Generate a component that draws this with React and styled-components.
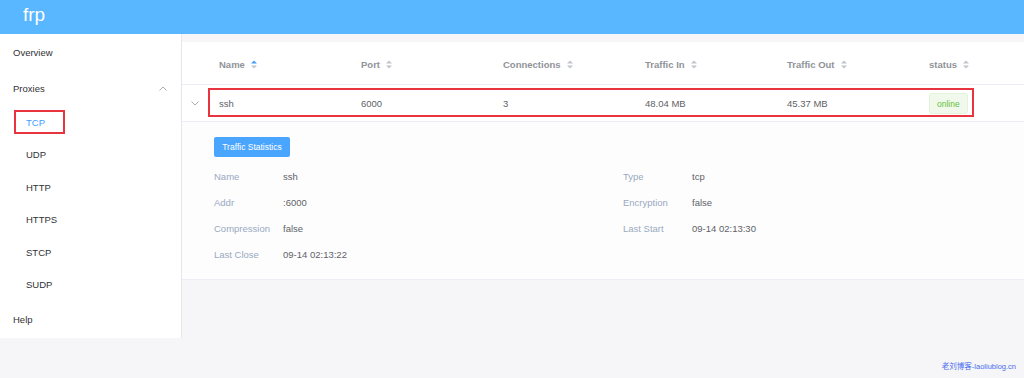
import React from "react"
import styled, { createGlobalStyle } from "styled-components"

const GlobalStyle = createGlobalStyle`
  html, body {
    margin: 0;
    padding: 0;
    background: #f6f6f8;
    font-family: "Liberation Sans", Arial, sans-serif;
  }
`

const columns = ["Name", "Port", "Connections", "Traffic In", "Traffic Out", "status"]
const row = { name: "ssh", port: "6000", conns: "3", trafficIn: "48.04 MB", trafficOut: "45.37 MB" }

const menu = ["TCP", "UDP", "HTTP", "HTTPS", "STCP", "SUDP"]

const leftDetails = [
  ["Name", "ssh"],
  ["Addr", ":6000"],
  ["Compression", "false"],
  ["Last Close", "09-14 02:13:22"],
]
const rightDetails = [
  ["Type", "tcp"],
  ["Encryption", "false"],
  ["Last Start", "09-14 02:13:30"],
]

const Chevron = ({ up }) => (
  <svg width="8" height="5" viewBox="0 0 8 5">
    <path
      d={up ? "M0.5 4.5 L4 1 L7.5 4.5" : "M0.5 0.5 L4 4 L7.5 0.5"}
      fill="none"
      stroke="#a0a4ab"
      strokeWidth="0.9"
    />
  </svg>
)

const SortCaret = ({ active }) => (
  <svg width="6" height="9" viewBox="0 0 6 9">
    <path d="M0 3.6 L3 0.4 L6 3.6 Z" fill={active ? "#409eff" : "#c0c4cc"} />
    <path d="M0 5.4 L3 8.6 L6 5.4 Z" fill="#c0c4cc" />
  </svg>
)

const App = () => {
  return (
    <Page>
      <GlobalStyle />
      <Header>
        <Logo>frp</Logo>
      </Header>
      <Body>
        <Sidebar>
          <MenuItem>Overview</MenuItem>
          <MenuItem>
            Proxies
            <Chevron up />
          </MenuItem>
          {menu.map(item => (
            <SubItem key={item}>
              <SubLabel $active={item === "TCP"}>{item}</SubLabel>
            </SubItem>
          ))}
          <MenuItem>Help</MenuItem>
        </Sidebar>
        <Main>
          <Panel>
            <HeadRow>
              <ExpandCell />
              {columns.map((c, i) => (
                <HeadCell key={c}>
                  {c}
                  <SortCaret active={i === 0} />
                </HeadCell>
              ))}
            </HeadRow>
            <DataRow>
              <ExpandCell>
                <Chevron />
              </ExpandCell>
              <Cell>{row.name}</Cell>
              <Cell>{row.port}</Cell>
              <Cell>{row.conns}</Cell>
              <Cell>{row.trafficIn}</Cell>
              <Cell>{row.trafficOut}</Cell>
              <Cell>
                <Tag>online</Tag>
              </Cell>
              <Highlight />
            </DataRow>
            <Expanded>
              <Button>Traffic Statistics</Button>
              <DetailGrid>
                <DetailCol>
                  {leftDetails.map(([k, v]) => (
                    <DetailRow key={k}>
                      <DetailLabel>{k}</DetailLabel>
                      <DetailValue>{v}</DetailValue>
                    </DetailRow>
                  ))}
                </DetailCol>
                <DetailCol>
                  {rightDetails.map(([k, v]) => (
                    <DetailRow key={k}>
                      <DetailLabel>{k}</DetailLabel>
                      <DetailValue>{v}</DetailValue>
                    </DetailRow>
                  ))}
                </DetailCol>
              </DetailGrid>
            </Expanded>
          </Panel>
        </Main>
      </Body>
      <Watermark>老刘博客-laoliublog.cn</Watermark>
    </Page>
  )
}
export default App

const Page = styled.div`
  position: relative;
  width: 1024px;
  height: 378px;
  overflow: hidden;
  background: #f6f6f8;
`
const Header = styled.div`
  height: 34px;
  background: #58b7ff;
  display: flex;
  align-items: center;
  padding-left: 23px;
`
const Logo = styled.span`
  color: #fff;
  font-size: 19px;
  margin-top: -5px;
`
const Body = styled.div`
  display: flex;
  height: 304px;
`
const Sidebar = styled.div`
  flex-shrink: 0;
  width: 182px;
  box-sizing: border-box;
  background: #fff;
  border-right: 1px solid #e6e6e6;
  display: flex;
  flex-direction: column;
`
const MenuItem = styled.div`
  height: 36px;
  display: flex;
  align-items: center;
  justify-content: space-between;
  padding: 1px 14px 0 13px;
  box-sizing: border-box;
  font-size: 9.5px;
  color: #303133;
`
const SubItem = styled.div`
  height: 32.5px;
  display: flex;
  align-items: center;
  padding-left: 14px;
`
const SubLabel = styled.span`
  display: flex;
  align-items: center;
  box-sizing: border-box;
  width: 51px;
  height: 24px;
  padding-left: 10px;
  font-size: 9.5px;
  color: ${props => (props.$active ? "#409eff" : "#303133")};
  border: 2px solid ${props => (props.$active ? "#e8343f" : "transparent")};
`
const Main = styled.div`
  flex: 1;
  min-width: 0;
  padding-top: 8px;
  background: #f6f6f8;
`
const Panel = styled.div`
  background: #fff;
`
const HeadRow = styled.div`
  display: flex;
  height: 43px;
  padding-top: 2px;
  align-items: center;
  border-bottom: 1px solid #ebeef5;
  box-sizing: border-box;
`
const ExpandCell = styled.div`
  flex: 0 0 26px;
  display: flex;
  justify-content: center;
  align-items: center;
`
const HeadCell = styled.div`
  flex: 0 0 142px;
  box-sizing: border-box;
  padding-left: 11px;
  display: flex;
  align-items: center;
  gap: 6px;
  font-size: 9.5px;
  font-weight: bold;
  color: #909399;
  &:last-child {
    flex: 1 1 auto;
  }
`
const DataRow = styled.div`
  position: relative;
  display: flex;
  height: 37px;
  padding-top: 1px;
  align-items: center;
  border-bottom: 1px solid #ebeef5;
  box-sizing: border-box;
`
const Cell = styled.div`
  flex: 0 0 142px;
  box-sizing: border-box;
  padding-left: 11px;
  font-size: 9.5px;
  color: #606266;
  &:nth-last-child(2) {
    flex: 1 1 auto;
  }
`
const Tag = styled.span`
  display: inline-flex;
  align-items: center;
  height: 21px;
  padding: 0 7px;
  box-sizing: border-box;
  background: #f0f9eb;
  border: 1px solid #e1f3d8;
  border-radius: 3px;
  color: #67c23a;
  font-size: 8.5px;
`
const Highlight = styled.div`
  position: absolute;
  left: 26px;
  top: 3px;
  width: 766px;
  height: 29px;
  box-sizing: border-box;
  border: 2px solid #e8343f;
  pointer-events: none;
`
const Expanded = styled.div`
  height: 158px;
  box-sizing: border-box;
  padding: 14px 0 0 32px;
  border-bottom: 1px solid #ebeef5;
  background: #fdfdfe;
`
const Button = styled.div`
  display: inline-flex;
  align-items: center;
  justify-content: center;
  width: 76px;
  height: 20px;
  background: #4aa5ff;
  border-radius: 2px;
  color: #fff;
  font-size: 8.5px;
`
const DetailGrid = styled.div`
  display: grid;
  grid-template-columns: 409px 1fr;
  margin-top: 6px;
`
const DetailCol = styled.div`
  display: flex;
  flex-direction: column;
`
const DetailRow = styled.div`
  height: 26px;
  display: flex;
  align-items: center;
  font-size: 9.5px;
`
const DetailLabel = styled.span`
  width: 69px;
  color: #99a9bf;
`
const DetailValue = styled.span`
  color: #606266;
`
const Watermark = styled.div`
  position: absolute;
  right: 8px;
  bottom: 7px;
  font-size: 7.5px;
  color: #4a6cf0;
  font-family: "Liberation Sans", "Noto Sans CJK SC", sans-serif;
`
